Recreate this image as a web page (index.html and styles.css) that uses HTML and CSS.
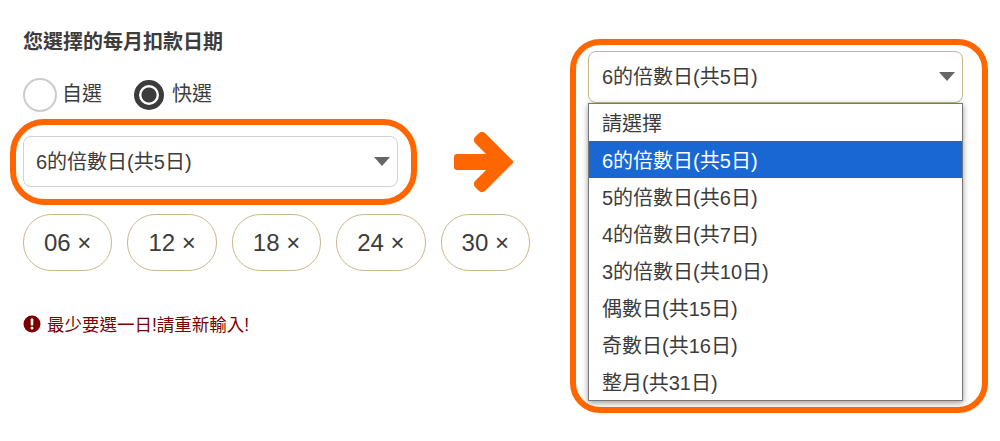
FILE: index.html
```html
<!DOCTYPE html>
<html lang="zh-Hant">
<head>
    <meta charset="UTF-8">
    <title>每月扣款日期</title>
    <link rel="stylesheet" href="styles.css">
</head>
<body>
    <div class="page">
        <div class="left-col">
            <h3 class="title">您選擇的每月扣款日期</h3>
            <div class="radio-row">
                <label class="radio-item">
                    <span class="radio"></span>
                    <span>自選</span>
                </label>
                <label class="radio-item">
                    <span class="radio checked"></span>
                    <span>快選</span>
                </label>
            </div>
            <div class="select-box">
                <div class="select">
                    <span>6的倍數日(共5日)</span>
                    <span class="caret"></span>
                </div>
                <div class="mark mark-left"></div>
            </div>
            <div class="chips">
                <span class="chip">06 ×</span>
                <span class="chip">12 ×</span>
                <span class="chip">18 ×</span>
                <span class="chip">24 ×</span>
                <span class="chip">30 ×</span>
            </div>
            <div class="error">
                <svg class="error-icon" viewBox="0 0 18 18" width="18" height="18">
                    <circle cx="9" cy="9" r="8.5" fill="#7b0000"/>
                    <rect x="7.7" y="3.6" width="2.6" height="6.8" rx="1" fill="#fff"/>
                    <circle cx="9" cy="13" r="1.5" fill="#fff"/>
                </svg>
                <span>最少要選一日!請重新輸入!</span>
            </div>
        </div>

        <svg class="arrow" viewBox="0 0 60 64" width="60" height="64">
            <path d="M3 24H32L21.5 13.5Q18 10 21.5 6.5L24.5 3.5Q28 0 31.5 3.5L58.5 30.5Q60 32 58.5 33.5L31.5 60.5Q28 64 24.5 60.5L21.5 57.5Q18 54 21.5 50.5L32 40H3Q0 40 0 37V27Q0 24 3 24Z" fill="#ff6600"/>
        </svg>

        <div class="right-col">
            <div class="mark mark-right"></div>
            <div class="select select-open">
                <span>6的倍數日(共5日)</span>
                <span class="caret"></span>
            </div>
            <ul class="options">
                <li>請選擇</li>
                <li class="active">6的倍數日(共5日)</li>
                <li>5的倍數日(共6日)</li>
                <li>4的倍數日(共7日)</li>
                <li>3的倍數日(共10日)</li>
                <li>偶數日(共15日)</li>
                <li>奇數日(共16日)</li>
                <li>整月(共31日)</li>
            </ul>
        </div>
    </div>
</body>
</html>
```

FILE: styles.css
```css
* {
    margin: 0;
    padding: 0;
    box-sizing: border-box;
}

body {
    font-family: "Liberation Sans", "Noto Sans CJK TC", sans-serif;
    color: #3c3c3c;
    background: #fff;
}

.page {
    display: flex;
    width: 1000px;
    height: 441px;
    overflow: hidden;
}

.left-col {
    width: 507px;
    margin-left: 23px;
    padding-top: 30px;
}

.title {
    font-size: 20px;
    line-height: 24px;
    font-weight: bold;
}

.radio-row {
    display: flex;
    align-items: center;
    gap: 32px;
    margin-top: 24px;
    height: 34px;
}

.radio-item {
    display: flex;
    align-items: center;
    gap: 5px;
    font-size: 20px;
    line-height: 30px;
}

.radio-item span:last-child {
    margin-bottom: 2px;
}

.radio {
    width: 34px;
    height: 34px;
    border: 2px solid #ccc;
    border-radius: 50%;
}

.radio.checked {
    width: 30px;
    height: 30px;
    border: 5px solid #3c3c3c;
    background: radial-gradient(circle, #3c3c3c 0, #3c3c3c 7px, #fff 8px);
    margin-right: 3px;
}

.select-box {
    position: relative;
    width: 375px;
    margin-top: 24px;
}

.select {
    display: flex;
    justify-content: space-between;
    align-items: center;
    height: 51px;
    padding: 0 7px 2px 12px;
    border: 1px solid #d2d2d2;
    border-radius: 8px;
    font-size: 20px;
    background: #fff;
}

.select-open {
    height: 52px;
    border-color: #c8b98a;
    padding: 0 7px 3px 13px;
    box-shadow: 0 2px 3px rgba(0, 0, 0, 0.06);
}

.caret {
    width: 0;
    height: 0;
    margin-top: 2px;
    border-left: 8px solid transparent;
    border-right: 8px solid transparent;
    border-top: 9px solid #666;
}

.mark {
    position: absolute;
    border: 6px solid #ff6600;
    pointer-events: none;
}

.mark-left {
    left: -13px;
    top: -17px;
    width: 407px;
    height: 86px;
    border-radius: 34px;
}

.mark-right {
    left: -18px;
    top: -12px;
    width: 418px;
    height: 374px;
    border-radius: 30px;
}

.chips {
    display: flex;
    gap: 15px;
    margin-top: 27px;
}

.chip {
    display: flex;
    align-items: center;
    justify-content: center;
    width: 89.4px;
    height: 57px;
    border: 1px solid #c8b98a;
    border-radius: 28px;
    font-size: 24px;
}

.error {
    display: flex;
    align-items: center;
    gap: 6px;
    margin-top: 40px;
    font-size: 17.5px;
    color: #7b0000;
}

.arrow {
    flex: none;
    margin: 130px 0 0 -76px;
}

.right-col {
    position: relative;
    width: 375px;
    margin: 51px 0 0 74px;
}

.options {
    list-style: none;
    border: 1px solid #777;
    background: #fff;
    box-shadow: 0 2px 6px rgba(0, 0, 0, 0.4);
}

.options li {
    height: 37px;
    line-height: 40px;
    padding-left: 13px;
    font-size: 20px;
    overflow: hidden;
}

.options li.active {
    background: #1967d2;
    color: #fff;
}
```
